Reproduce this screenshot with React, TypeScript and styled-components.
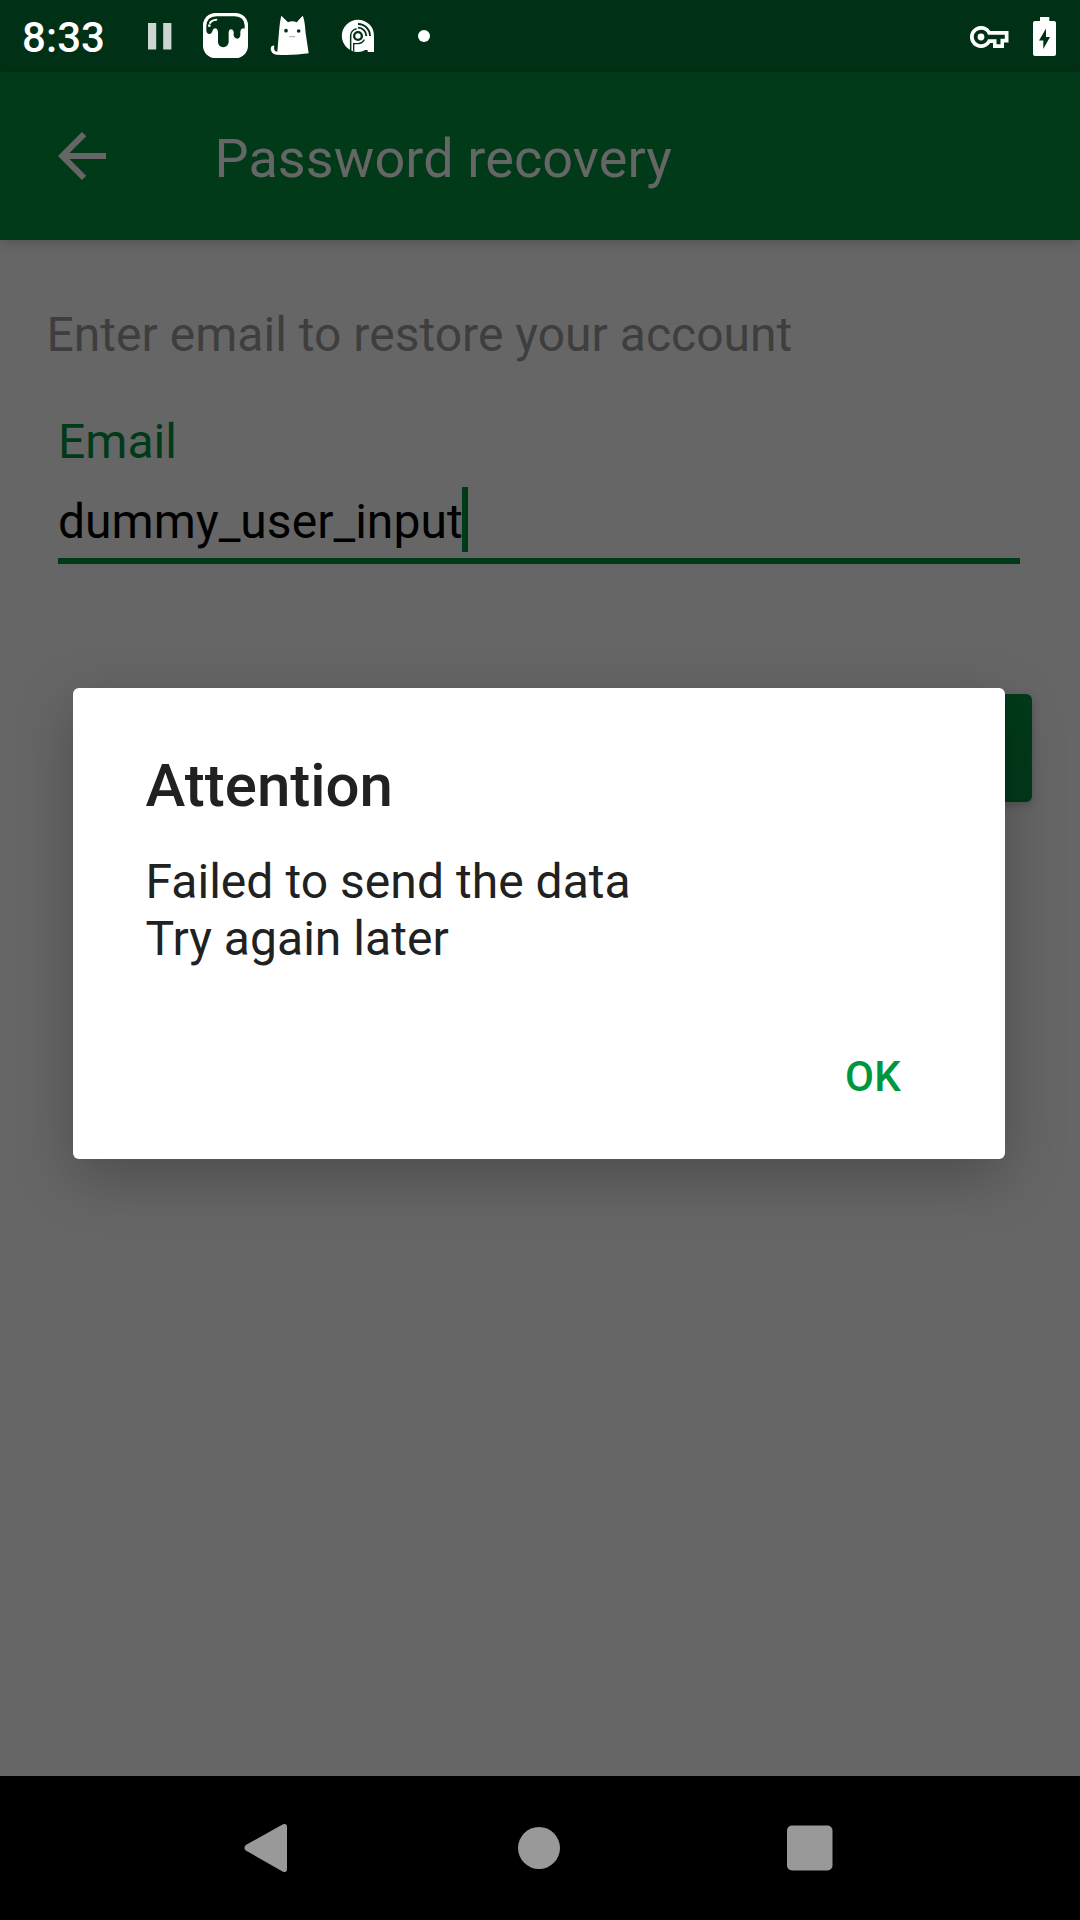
import React from 'react';
import styled, { createGlobalStyle } from 'styled-components';

const PRIMARY = '#009640';

const GlobalStyle = createGlobalStyle`
  * { box-sizing: border-box; }
  body { margin: 0; background: #000; font-family: Roboto, "Noto Sans", sans-serif; }
`;

const Screen = styled.div`
  position: relative;
  width: 1080px;
  height: 1920px;
  display: flex;
  flex-direction: column;
  overflow: hidden;
  background: #666;
`;

const StatusBar = styled.header`
  height: 72px;
  flex: none;
  display: flex;
  align-items: center;
  padding: 0 24px 0 22px;
  background: #003015;
  color: #fff;
`;

const Clock = styled.time`
  width: 126px;
  font-size: 42px;
  font-weight: 500;
  line-height: 50px;
  padding-top: 3px;
  letter-spacing: 0.1px;
`;

const StatusIcon = styled.svg<{ $gap?: number; $drop?: number }>`
  flex: none;
  display: block;
  margin-left: ${(p) => p.$gap ?? 0}px;
  margin-top: ${(p) => p.$drop ?? 0}px;
`;

const Spacer = styled.div`
  flex: 1;
`;

const Toolbar = styled.div`
  height: 168px;
  flex: none;
  display: flex;
  align-items: center;
  padding-left: 46px;
  background: #003a19;
  color: #666;
  box-shadow: 0 3px 10px rgba(0, 0, 0, 0.17);
  z-index: 1;
`;

const BackButton = styled.button`
  width: 72px;
  height: 72px;
  padding: 0;
  border: 0;
  background: none;
  color: inherit;
  svg { display: block; }
`;

const ToolbarTitle = styled.h1`
  margin: 6px 0 0 96.5px;
  font-size: 54px;
  font-weight: 400;
  line-height: 64px;
  letter-spacing: 0.1px;
`;

const Content = styled.main`
  flex: 1;
  padding: 67px 48px 0 46.5px;
`;

const Hint = styled.p`
  margin: 0;
  font-size: 48px;
  line-height: 56px;
  letter-spacing: 0.02px;
  color: #3e3e3e;
`;

const Field = styled.div`
  margin: 51px 12px 0 11.5px;
  display: flex;
  flex-direction: column;
  border-bottom: 6px solid #003a19;
`;

const FieldLabel = styled.label`
  font-size: 48px;
  line-height: 56px;
  color: #003a19;
`;

const FieldValue = styled.div`
  height: 88px;
  padding-top: 17px;
  display: flex;
  font-size: 48px;
  line-height: 69px;
  letter-spacing: 0.04px;
  color: #000;
`;

const Caret = styled.span`
  width: 6px;
  height: 65px;
  margin-left: -1px;
  background: #003a19;
`;

const SendButton = styled.button`
  display: block;
  width: 480px;
  height: 108px;
  margin: 130px 0 0 auto;
  border: 0;
  border-radius: 6px;
  background: #003a19;
  box-shadow: 0 3px 8px rgba(0, 0, 0, 0.2);
`;

const DialogLayer = styled.div`
  position: absolute;
  inset: 0;
  z-index: 2;
  display: flex;
  justify-content: center;
  align-items: flex-start;
  padding: 688px 75px 0 73px;
`;

const Dialog = styled.section`
  width: 100%;
  height: 471px;
  display: flex;
  flex-direction: column;
  padding: 62px 73px 46px 72.5px;
  border-radius: 6px;
  background: #fff;
  color: #212121;
  box-shadow: 0 18px 60px rgba(0, 0, 0, 0.26);
`;

const DialogTitle = styled.h2`
  margin: 0;
  font-size: 60px;
  font-weight: 500;
  line-height: 71px;
`;

const DialogText = styled.p`
  margin: 32px 0 0;
  font-size: 48px;
  line-height: 57px;
  letter-spacing: 0.04px;
`;

const DialogActions = styled.div`
  flex: 1;
  display: flex;
  justify-content: flex-end;
  align-items: flex-end;
`;

const DialogButton = styled.button`
  height: 72px;
  padding: 0 31px;
  border: 0;
  background: none;
  color: ${PRIMARY};
  font: 500 42px/72px Roboto, sans-serif;
  letter-spacing: 0.3px;
`;

const NavBar = styled.nav`
  height: 144px;
  flex: none;
  display: flex;
  align-items: center;
  gap: 225px;
  padding-left: 244px;
  background: #000;
  svg { display: block; overflow: visible; }
`;

const bar = '#003015';

export default function App() {
  return (
    <Screen>
      <GlobalStyle />
      <StatusBar>
        <Clock>8:33</Clock>
        <StatusIcon width="24" height="28" viewBox="0 0 24 28">
          <path d="M0 1h8.2v26.5H0zM15.2 1h8.2v26.5h-8.2z" fill="#ccd6d0" />
        </StatusIcon>
        <StatusIcon $gap={31} $drop={-1} width="45" height="45" viewBox="39 39 135 135">
          <rect x="39" y="39" width="135" height="135" rx="37" fill="#fff" />
          <path
            d="M49 92V78Q50 50 80 49H134Q163 50 164 76V86Q154 82 151 94V106Q150 115 142 116Q132 115 131 105V95Q129 88 123 88Q116 89 116 99V127Q114 141 100 142Q85 140 84 127V97Q83 85 75 85Q68 86 67 94Q65 103 58 102Q50 101 49 92Z"
            fill={bar}
          />
          <path d="M60 69Q65 60 79 59" stroke="#fff" strokeWidth="6" strokeLinecap="round" fill="none" />
          <circle cx="58" cy="77" r="4" fill="#fff" />
        </StatusIcon>
        <StatusIcon $gap={22} $drop={-2} width="40" height="42" viewBox="240 42 120 126">
          <path
            d="M274 47L294 67Q307 60 320 67L338 47Q344 57 347 100L356 160Q308 167 259 164Q243 162 242 145Q244 135 253 137Q249 154 262 155L267 95Q270 60 274 47Z"
            fill="#fff"
          />
          <circle cx="288" cy="92" r="5.5" fill={bar} />
          <circle cx="326" cy="93" r="5.5" fill={bar} />
          <path d="M298 111Q307 107 316 111" stroke="#aab8b0" strokeWidth="4" fill="none" />
        </StatusIcon>
        <StatusIcon $gap={31} width="34" height="34" viewBox="453 57 102 102">
          <path d="M504 59A48 48 0 0 1 552 107V156H533V150H526Q516 156 504 156A48.5 48.5 0 0 1 504 59Z" fill="#fff" />
          <path d="M482 152V108A22 22 0 0 1 500 86" stroke={bar} strokeWidth="4.5" fill="none" />
          <path d="M523 119A22 22 0 0 1 504 131H491V154" stroke={bar} strokeWidth="4" fill="none" />
          <circle cx="504" cy="108" r="11.5" stroke={bar} strokeWidth="7" fill="none" />
          <path d="M504 72A36 36 0 0 1 540 108" stroke={bar} strokeWidth="5.5" fill="none" />
          <path d="M504 83A25 25 0 0 1 529 108" stroke={bar} strokeWidth="5.5" fill="none" />
        </StatusIcon>
        <StatusIcon $gap={43} width="12" height="12" viewBox="0 0 12 12">
          <circle cx="6" cy="6" r="6" fill="#fff" />
        </StatusIcon>
        <Spacer />
        <StatusIcon $drop={2} width="39" height="22" viewBox="0 0 39 22">
          <path
            fillRule="evenodd"
            fill="#fff"
            d="M11 0A11 11 0 1 0 20.2 17H23V22H34V16.5H38.5V5H20.2A11 11 0 0 0 11 0ZM11 3.7A7.3 7.3 0 0 1 18 8.7H34.8V12.8H30.5V18.3H26.5V13.3H18A7.3 7.3 0 1 1 11 3.7ZM11 7.6A3.4 3.4 0 1 0 11 14.4A3.4 3.4 0 1 0 11 7.6Z"
          />
        </StatusIcon>
        <StatusIcon $gap={24} width="23" height="39" viewBox="0 0 23 39">
          <path
            fillRule="evenodd"
            fill="#fff"
            d="M7 0H16.3V4H21A2 2 0 0 1 23 6V37A2 2 0 0 1 21 39H2A2 2 0 0 1 0 37V6A2 2 0 0 1 2 4H7ZM13 11.5L6 23.5H10.3V32L17 20H13Z"
          />
        </StatusIcon>
      </StatusBar>

      <Toolbar>
        <BackButton aria-label="Back">
          <svg width="72" height="72" viewBox="0 0 24 24">
            <path fill="currentColor" d="M20 11H7.83l5.59-5.59L12 4l-8 8 8 8 1.41-1.41L7.83 13H20v-2z" />
          </svg>
        </BackButton>
        <ToolbarTitle>Password recovery</ToolbarTitle>
      </Toolbar>

      <Content>
        <Hint>Enter email to restore your account</Hint>
        <Field>
          <FieldLabel>Email</FieldLabel>
          <FieldValue>
            dummy_user_input
            <Caret />
          </FieldValue>
        </Field>
        <SendButton aria-label="Send" />
      </Content>

      <NavBar>
        <svg width="46" height="50" viewBox="0 0 46 50">
          <path d="M1.8 22L39 1.3Q43 0 43 4V46Q43 50 39 48.7L1.8 27.5Q-1 25 1.8 22Z" fill="#999" />
        </svg>
        <svg width="48" height="48" viewBox="0 0 48 48">
          <circle cx="24" cy="24" r="21" fill="#999" />
        </svg>
        <svg width="46" height="46" viewBox="0 0 46 46">
          <rect x="-1" y="0.5" width="45.5" height="45" rx="5" fill="#999" />
        </svg>
      </NavBar>

      <DialogLayer>
        <Dialog role="dialog">
          <DialogTitle>Attention</DialogTitle>
          <DialogText>
            Failed to send the data
            <br />
            Try again later
          </DialogText>
          <DialogActions>
            <DialogButton>OK</DialogButton>
          </DialogActions>
        </Dialog>
      </DialogLayer>
    </Screen>
  );
}
